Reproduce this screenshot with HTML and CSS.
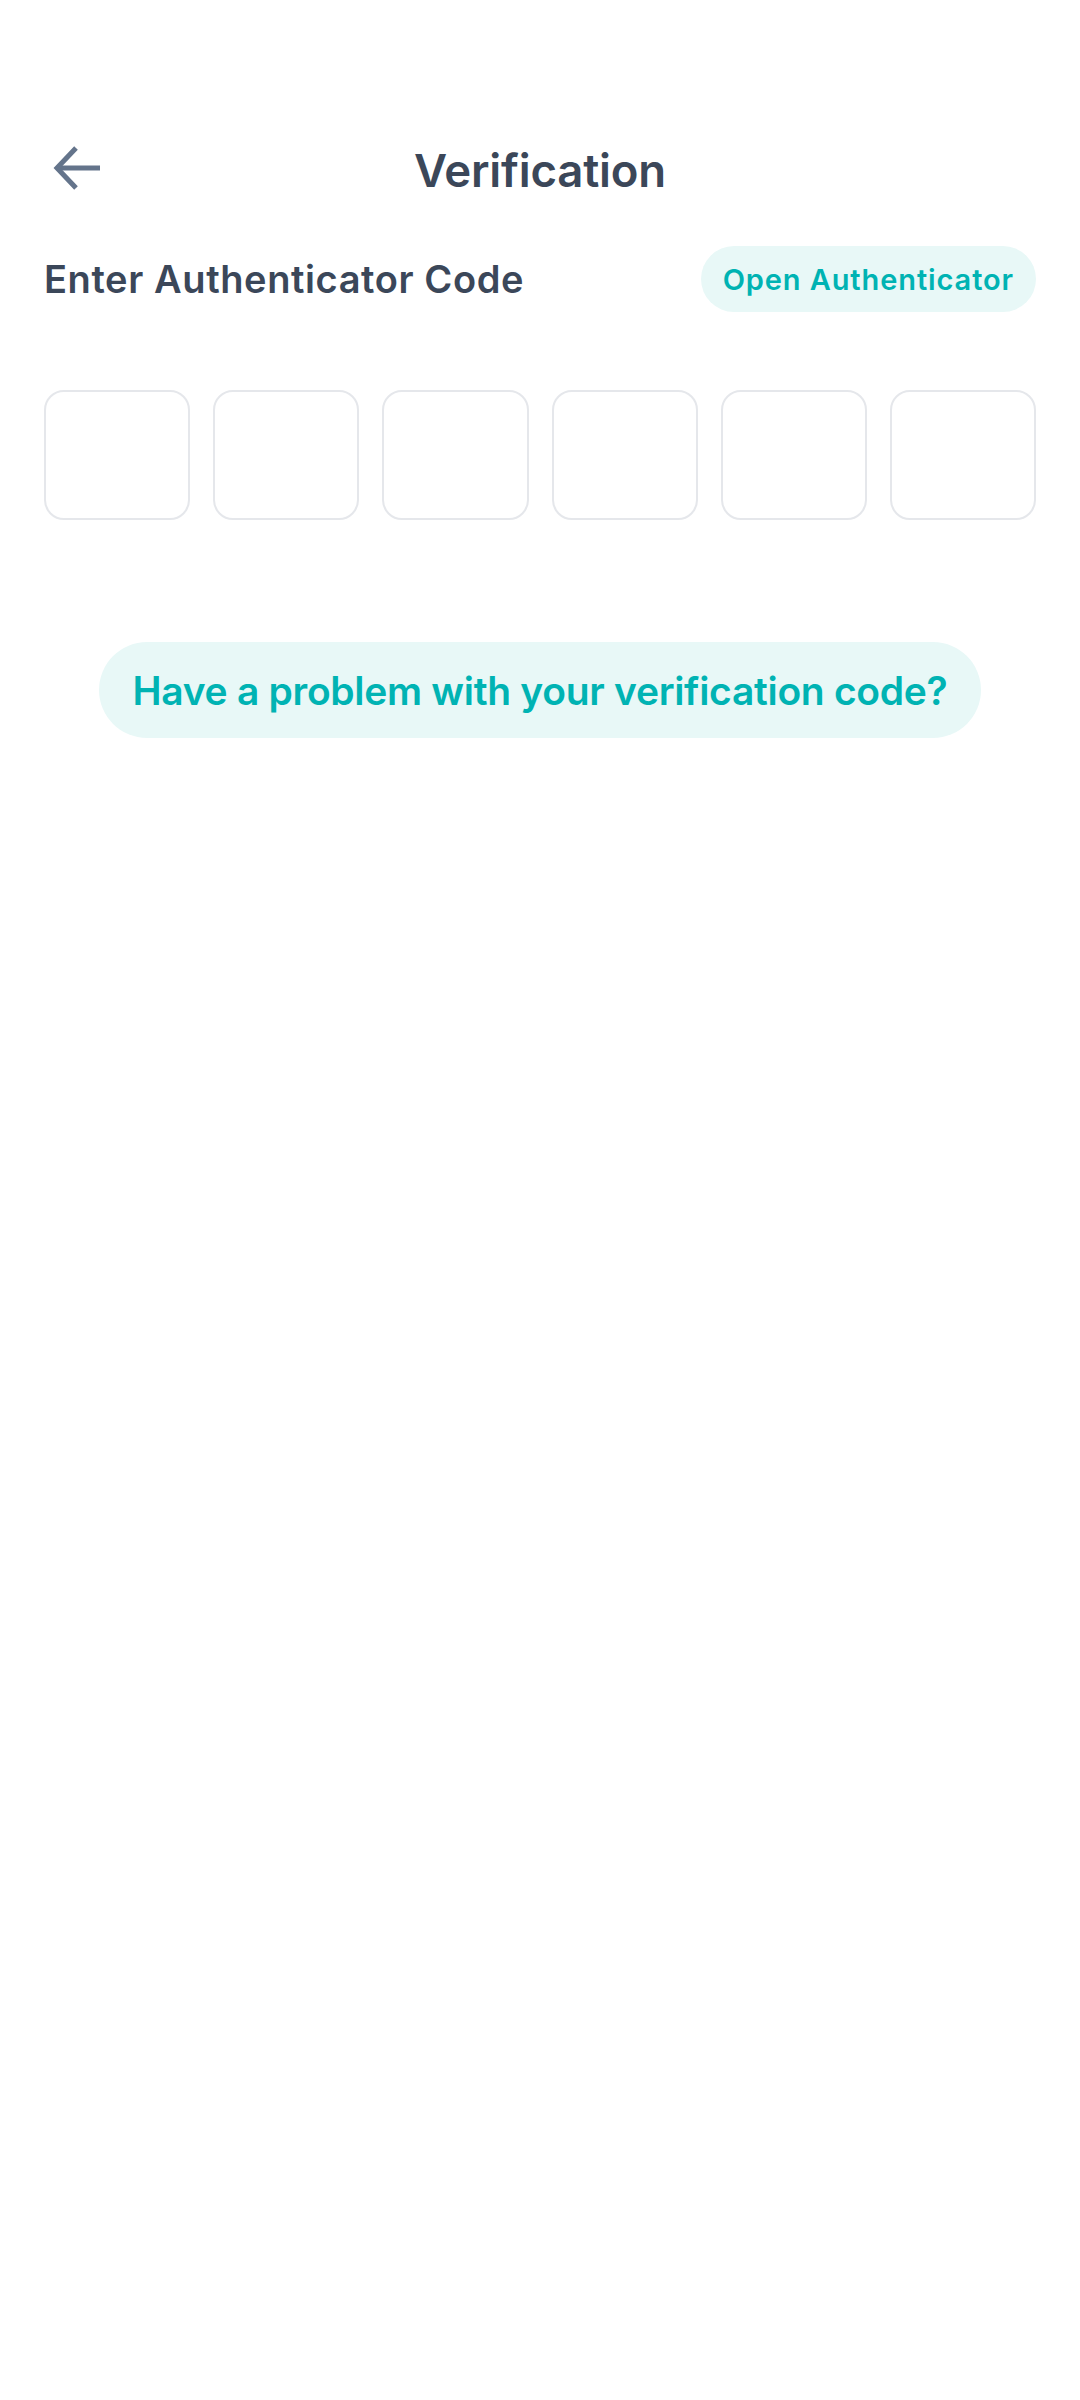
FILE: index.html
```html
<!DOCTYPE html>
<html lang="en">
<head>
<meta charset="utf-8">
<title>Verification</title>
<link rel="stylesheet" href="styles.css">
</head>
<body>
<div class="page">
  <header class="header">
    <button class="back" aria-label="Back">
      <svg width="56" height="56" viewBox="0 0 56 56" fill="none" stroke="#64748b" stroke-width="5" stroke-linecap="butt" stroke-linejoin="miter">
        <path d="M13 26H56"/>
        <path d="M32 6L13 26L32 46"/>
      </svg>
    </button>
    <h1 class="title">Verification</h1>
    <span></span>
  </header>

  <div class="label-row">
    <span class="label">Enter Authenticator Code</span>
    <span class="pill">Open Authenticator</span>
  </div>

  <div class="code-boxes">
    <div class="box"></div>
    <div class="box"></div>
    <div class="box"></div>
    <div class="box"></div>
    <div class="box"></div>
    <div class="box"></div>
  </div>

  <div class="help-wrap">
    <span class="help">Have a problem with your verification code?</span>
  </div>
</div>
</body>
</html>
```

FILE: styles.css
```css
html, body {
  margin: 0;
  padding: 0;
  background: #ffffff;
}

body {
  width: 1080px;
  height: 2400px;
  font-family: Inter, "Noto Sans", sans-serif;
  color: #3b4759;
}

.page {
  padding: 122px 44px 0;
}

.header {
  display: grid;
  grid-template-columns: 1fr auto 1fr;
  align-items: center;
  height: 96px;
}

.back {
  background: none;
  border: 0;
  padding: 0;
  width: 64px;
  height: 56px;
  display: flex;
  align-items: center;
  justify-content: flex-start;
}

.back svg {
  display: block;
}

.title {
  margin: 0;
  font-size: 45.5px;
  font-weight: 600;
  letter-spacing: -0.2px;
  color: #3b4759;
}

.label-row {
  margin-top: 28px;
  height: 66px;
  display: flex;
  align-items: center;
  justify-content: space-between;
}

.label {
  font-size: 38px;
  font-weight: 600;
  letter-spacing: 0.6px;
  color: #3b4759;
}

.pill {
  height: 66px;
  display: flex;
  align-items: center;
  padding: 0 22px;
  border-radius: 33px;
  background: #e8f8f7;
  color: #00b3b3;
  font-size: 29px;
  font-weight: 600;
  letter-spacing: 0.9px;
}

.code-boxes {
  margin-top: 78px;
  display: grid;
  grid-template-columns: repeat(6, 1fr);
  gap: 23px;
}

.box {
  height: 130px;
  box-sizing: border-box;
  border: 2px solid #e5e7eb;
  border-radius: 20px;
}

.help-wrap {
  margin-top: 122px;
  display: flex;
  justify-content: center;
}

.help {
  height: 96px;
  display: flex;
  align-items: center;
  padding: 0 34px;
  border-radius: 48px;
  background: #e8f8f7;
  color: #00b3b3;
  font-size: 39px;
  font-weight: 600;
  letter-spacing: -0.3px;
}
```
